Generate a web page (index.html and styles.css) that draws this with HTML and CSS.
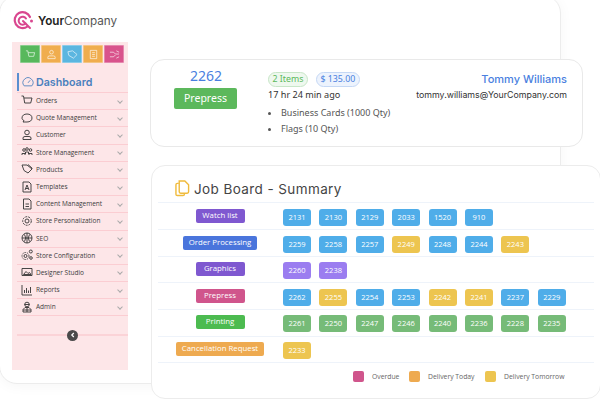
FILE: index.html
```html
<!DOCTYPE html>
<html lang="en">
<head>
    <meta charset="UTF-8">
    <title>YourCompany Job Board</title>
    <link rel="stylesheet" href="styles.css">
</head>
<body>
    <div class="stage">
        <!-- Back window with sidebar -->
        <div class="window">
            <div class="logo">
                <svg class="logo-mark" viewBox="0 0 22 22" width="22" height="22">
                    <path d="M15.5 16.5A8 8 0 1 1 18 7" fill="none" stroke="#d9478f" stroke-width="2.2" stroke-linecap="round"/>
                    <path d="M13.5 13.5A4 4 0 1 1 14 8.5" fill="none" stroke="#d9478f" stroke-width="2" stroke-linecap="round"/>
                    <path d="M11 11l7 7" stroke="#d9478f" stroke-width="2" stroke-linecap="round"/>
                    <circle cx="19.5" cy="11" r="1.5" fill="#d9478f"/>
                </svg>
                <span class="logo-text"><b>Your</b>Company</span>
            </div>
            <div class="sidebar">
                <div class="tabs">
                    <div class="tab green"><svg viewBox="0 0 12 12" width="11" height="11"><path d="M1 2h2l1.200 6h5.300L10.500 4H3.500M5 10.500h.01M9 10.500h.01" class="tab-icon"/></svg></div>
                    <div class="tab orange"><svg viewBox="0 0 12 12" width="11" height="11"><circle cx="6" cy="3.500" r="2" class="tab-icon"/><path d="M2 10.500V9q0-1.500 2-1.500h4q2 0 2 1.500v1.500z" class="tab-icon"/></svg></div>
                    <div class="tab blue"><svg viewBox="0 0 12 12" width="11" height="11"><path d="M1 3l5-1 5 4-4 4-5-3z" class="tab-icon"/></svg></div>
                    <div class="tab orange"><svg viewBox="0 0 12 12" width="11" height="11"><path d="M2.500 1.500h7v9h-7zM4.500 4h3M4.500 6h3M4.500 8h3" class="tab-icon"/></svg></div>
                    <div class="tab pink"><svg viewBox="0 0 12 12" width="11" height="11"><path d="M1 3.500h4l2 2h4M1 8.500h4l2-2M8 2l3 1.500M8 10l3-1.500" class="tab-icon"/></svg></div>
                </div>
                <div class="dash">
                    <svg viewBox="0 0 14 14" width="12" height="12"><path d="M2.500 11.500a5.800 5.800 0 1 1 9 0zM7 8l2.500-3" fill="none" stroke="#4a80bd" stroke-width="1"/></svg>
                    <span>Dashboard</span>
                </div>
                <ul class="menu">
                    <li><svg viewBox="0 0 12 12"><path d="M0.500 1h2l1.200 7h6L11 3H3M4.500 10.500h.01M9 10.500h.01"/></svg><span>Orders</span><i></i></li>
                    <li><svg viewBox="0 0 12 12"><path d="M6 2c3 0 5 1.500 5 4s-2 4-5 4H2l1-1.500C1.500 8 1 7 1 6c0-2.500 2-4 5-4z"/></svg><span>Quote Management</span><i></i></li>
                    <li><svg viewBox="0 0 12 12"><circle cx="6" cy="3.500" r="2.300"/><path d="M2 10.500V9q0-1.500 2-1.500h4q2 0 2 1.500v1.500z"/></svg><span>Customer</span><i></i></li>
                    <li><svg viewBox="0 0 12 12"><circle cx="3" cy="4" r="1.300"/><circle cx="6" cy="3" r="1.300"/><circle cx="9.500" cy="4" r="1.300"/><path d="M1 9V7.500h3V9M4.500 8V6h3v2M8 9V7.500h3V9"/></svg><span>Store Management</span><i></i></li>
                    <li><svg viewBox="0 0 12 12"><path d="M1 2h5l5 4-4 4-4-2.500zM7 1.500l4.500 4"/></svg><span>Products</span><i></i></li>
                    <li><svg viewBox="0 0 12 12"><path d="M2 1h6l2 2v8H2zM4 9l2-5 2 5M4.800 7.500h2.400"/></svg><span>Templates</span><i></i></li>
                    <li><svg viewBox="0 0 12 12"><path d="M2.500 1H8l2 2v8H2.500zM4.500 6h3.500M4.500 8.500h3.500"/></svg><span>Content Management</span><i></i></li>
                    <li><svg viewBox="0 0 12 12"><circle cx="6" cy="6" r="2"/><circle cx="6" cy="6" r="4.300" stroke-dasharray="2 1"/></svg><span>Store Personalization</span><i></i></li>
                    <li><svg viewBox="0 0 12 12"><circle cx="6" cy="6" r="5"/><path d="M1 6h10M6 1v10M3.500 2.500q2.500 3.500 0 7M8.500 2.500q-2.500 3.500 0 7"/></svg><span>SEO</span><i></i></li>
                    <li><svg viewBox="0 0 12 12"><circle cx="4.500" cy="7" r="1.500"/><circle cx="4.500" cy="7" r="3.500" stroke-dasharray="1.500 1"/><circle cx="9.800" cy="2.500" r="1.500"/><circle cx="10" cy="9" r="1.300"/></svg><span>Store Configuration</span><i></i></li>
                    <li><svg viewBox="0 0 12 12"><path d="M1 2.500h10v7H1zM2.500 8.500l2.500-3 2 2 1.500-1 1.500 2z"/></svg><span>Designer Studio</span><i></i></li>
                    <li><svg viewBox="0 0 12 12"><path d="M1 1v10h10M3.500 9V6M5.500 9V4M7.500 9V6.500M9.500 9V3"/></svg><span>Reports</span><i></i></li>
                    <li><svg viewBox="0 0 12 12"><circle cx="6" cy="3.500" r="2.300"/><path d="M3.500 3.500h5M2 11V8.500L4 6.500h4l2 2V11zM6 6.500V11M2 9h8"/></svg><span>Admin</span><i></i></li>
                </ul>
                <div class="collapse"><span class="collapse-btn"><svg viewBox="0 0 10 10" width="10" height="10"><path d="M5.800 3L3.800 5l2 2" fill="none" stroke="#fff" stroke-width="1.200"/></svg></span></div>
            </div>
        </div>

        <!-- Order card -->
        <div class="order-card">
            <div class="order-id">
                <div class="order-num">2262</div>
                <div class="order-status">Prepress</div>
            </div>
            <div class="order-info">
                <div class="order-tags">
                    <span class="tag tag-green">2 Items</span>
                    <span class="tag tag-blue">$ 135.00</span>
                </div>
                <div class="order-time">17 hr 24 min ago</div>
                <ul class="order-items">
                    <li>Business Cards (1000 Qty)</li>
                    <li>Flags (10 Qty)</li>
                </ul>
            </div>
            <div class="order-client">
                <div class="client-name">Tommy Williams</div>
                <div class="client-mail">tommy.williams@YourCompany.com</div>
            </div>
        </div>

        <!-- Job board -->
        <div class="board">
            <div class="board-title">
                <svg viewBox="0 0 16 18" width="15" height="17"><path d="M4 3.500H2.500Q1 3.500 1 5v10q0 1.500 1.500 1.500h6Q10 16.500 10 15v-1" fill="none" stroke="#f0bb3c" stroke-width="1.500"/><path d="M4.500 1h6L14.500 5v7.500q0 1.500-1.500 1.500H6q-1.500 0-1.500-1.500z" fill="#fff" stroke="#f0bb3c" stroke-width="1.500"/></svg>
                <h2>Job Board - Summary</h2>
            </div>
            <div class="row">
                <div class="row-label"><span class="pill purple">Watch list</span></div>
                <div class="chips"><span class="chip sky">2131</span><span class="chip sky">2130</span><span class="chip sky">2129</span><span class="chip sky">2033</span><span class="chip sky">1520</span><span class="chip sky">910</span></div>
            </div>
            <div class="row">
                <div class="row-label"><span class="pill indigo wide">Order Processing</span></div>
                <div class="chips"><span class="chip sky">2259</span><span class="chip sky">2258</span><span class="chip sky">2257</span><span class="chip yellow">2249</span><span class="chip sky">2248</span><span class="chip sky">2244</span><span class="chip yellow">2243</span></div>
            </div>
            <div class="row">
                <div class="row-label"><span class="pill purple">Graphics</span></div>
                <div class="chips"><span class="chip violet">2260</span><span class="chip violet">2238</span></div>
            </div>
            <div class="row">
                <div class="row-label"><span class="pill rose">Prepress</span></div>
                <div class="chips"><span class="chip sky">2262</span><span class="chip yellow">2255</span><span class="chip sky">2254</span><span class="chip sky">2253</span><span class="chip yellow">2242</span><span class="chip yellow">2241</span><span class="chip sky">2237</span><span class="chip sky">2229</span></div>
            </div>
            <div class="row">
                <div class="row-label"><span class="pill lime">Printing</span></div>
                <div class="chips"><span class="chip moss">2261</span><span class="chip moss">2250</span><span class="chip moss">2247</span><span class="chip moss">2246</span><span class="chip moss">2240</span><span class="chip moss">2236</span><span class="chip moss">2228</span><span class="chip moss">2235</span></div>
            </div>
            <div class="row">
                <div class="row-label"><span class="pill amber wide">Cancellation Request</span></div>
                <div class="chips"><span class="chip yellow">2233</span></div>
            </div>
            <div class="legend">
                <span class="legend-item"><i class="swatch rose"></i>Overdue</span>
                <span class="legend-item"><i class="swatch amber"></i>Delivery Today</span>
                <span class="legend-item"><i class="swatch yellow"></i>Delivery Tomorrow</span>
            </div>
        </div>
    </div>
</body>
</html>
```

FILE: styles.css
```css
body {
    margin: 0;
    background: #fff;
    font-family: "Open Sans", sans-serif;
    overflow: hidden;
}

.stage {
    position: relative;
    width: 600px;
    height: 400px;
    overflow: hidden;
}

/* Back window */
.window {
    position: absolute;
    top: -5px;
    left: -1px;
    width: 560px;
    height: 387px;
    background: #fff;
    border: 1px solid #ececec;
    border-radius: 18px;
    box-shadow: 0 2px 14px rgba(0, 0, 0, 0.04);
}

.logo {
    display: flex;
    align-items: center;
    gap: 4px;
    padding: 13px 0 0 12px;
    height: 23px;
}

.logo-text {
    font-family: Inter, sans-serif;
    font-size: 11.700px;
    color: #555;
}

.logo-text b {
    font-weight: 600;
    color: #222;
}

.sidebar {
    margin: 10px 0 0 12px;
    width: 116px;
    height: 328px;
    background: #fde6e8;
    padding: 3px 0 0 5px;
    box-sizing: border-box;
}

.tabs {
    display: flex;
    gap: 1px;
    margin-left: 3px;
}

.tab {
    flex: 0 0 20px;
    height: 18px;
    box-sizing: border-box;
    display: flex;
    align-items: center;
    justify-content: center;
    border: 1px solid rgba(255, 255, 255, 0.3);
    border-radius: 1px;
}

.tab-icon {
    fill: none;
    stroke: rgba(255, 255, 255, 0.75);
    stroke-width: 0.9;
}

.green { background: #58b85c; }
.orange { background: #f0ad4e; }
.blue { background: #5bb6e0; }
.pink { background: #d9538c; }

.dash {
    display: flex;
    align-items: center;
    gap: 2px;
    height: 18px;
    margin-top: 10px;
    padding-left: 3px;
    border-left: 2px solid #5a8fd0;
    color: #4a80bd;
    font-family: Inter, sans-serif;
    font-size: 10.700px;
    font-weight: 600;
}

.menu {
    list-style: none;
    margin: 1px 0 0;
    padding: 0;
    border-top: 1px solid #fbcdd2;
}

.menu li {
    display: flex;
    align-items: center;
    height: 15.200px;
    padding: 0 5px 1px 0;
    border-bottom: 1px solid #fbcdd2;
    color: #3c3c3c;
    font-size: 6.500px;
}

.menu svg {
    flex: 0 0 12px;
    width: 12px;
    height: 12px;
    margin: 0 3px 0 4px;
    fill: none;
    stroke: #333;
    stroke-width: 0.9;
}

.menu span {
    flex: 1;
}

/* small chevron at the row end */
.menu i {
    width: 3px;
    height: 3px;
    margin-right: 1px;
    border-right: 1px solid #aaa;
    border-bottom: 1px solid #aaa;
    transform: rotate(45deg);
}

.collapse {
    display: flex;
    justify-content: center;
    align-items: center;
    height: 2px;
    margin-top: 18px;
    background: #fbd3d7;
}

.collapse-btn {
    display: flex;
    align-items: center;
    justify-content: center;
    width: 11px;
    height: 11px;
    flex: none;
    border-radius: 50%;
    background: #4a4a4a;
}

/* Order card */
.order-card {
    position: absolute;
    top: 59px;
    left: 150px;
    width: 433px;
    height: 88px;
    box-sizing: border-box;
    display: flex;
    background: #fff;
    border: 1px solid #e9e9e9;
    border-radius: 14px;
    font-family: "Noto Sans", sans-serif;
    color: #444;
}

.order-id {
    flex: 0 0 109px;
    display: flex;
    flex-direction: column;
    align-items: center;
    padding-top: 6px;
}

.order-num {
    color: #4a7fe0;
    font-size: 14px;
    line-height: 20px;
    margin-left: 1px;
}

.order-status {
    margin-top: 2px;
    width: 63px;
    height: 21px;
    line-height: 20px;
    text-align: center;
    border-radius: 2px;
    background: #5cb85c;
    color: #fff;
    font-size: 10.500px;
}

.order-info {
    flex: 1;
    margin-left: 8px;
    padding-top: 12px;
}

.order-tags {
    display: flex;
    gap: 8px;
}

.tag {
    box-sizing: border-box;
    height: 15px;
    line-height: 13px;
    padding: 0 3.500px;
    border-radius: 8px;
    font-size: 8.800px;
}

.tag-green {
    color: #5cb85c;
    background: #eef8ee;
    border: 1px solid #c8e6c8;
}

.tag-blue {
    color: #4a7fe0;
    background: #edf3fd;
    border: 1px solid #c5d8f5;
}

.order-time {
    font-size: 9.100px;
    line-height: 15px;
    color: #333;
}

.order-items {
    margin: 3px 0 0;
    padding-left: 13px;
    font-size: 9px;
    line-height: 15.800px;
    color: #555;
}

.order-client {
    text-align: right;
    padding: 12px 15px 0 0;
}

.client-name {
    color: #4a7fe0;
    font-family: Inter, sans-serif;
    font-size: 11px;
    font-weight: 500;
    line-height: 14px;
}

.client-mail {
    margin-top: 2px;
    font-family: Inter, sans-serif;
    font-size: 8.800px;
    line-height: 14px;
    color: #333;
}

/* Job board */
.board {
    position: absolute;
    top: 165px;
    left: 151px;
    width: 450px;
    height: 234px;
    box-sizing: border-box;
    padding: 0 6px;
    background: #fff;
    border: 1px solid #ececec;
    border-radius: 14px;
}

.board-title {
    display: flex;
    align-items: center;
    gap: 4px;
    height: 37.300px;
    box-sizing: border-box;
    padding: 9px 0 0 17px;
    border-bottom: 1px solid #eef3fa;
}

.board-title h2 {
    margin: 0;
    font-family: Inter, sans-serif;
    font-size: 13.500px;
    font-weight: 400;
    color: #444;
    letter-spacing: 0.4px;
}

.row {
    display: flex;
    height: 25.650px;
    border-bottom: 1px solid #eef3fa;
}

.row-label {
    flex: 0 0 124px;
    display: flex;
    justify-content: center;
    padding-top: 5.600px;
    box-sizing: border-box;
}

.pill {
    width: 49px;
    height: 14px;
    line-height: 13px;
    text-align: center;
    white-space: nowrap;
    border-radius: 2px;
    color: #fff;
    font-size: 7.800px;
}

.pill.wide {
    width: auto;
    padding: 0 6px;
}

.purple { background: #7f58d0; }
.indigo { background: #4a75dc; }
.rose { background: #d0558c; }
.lime { background: #4cbb50; }
.amber { background: #eeaa50; }

.chips {
    display: flex;
    gap: 8.400px;
    padding: 5.600px 0 0 1px;
}

.chip {
    width: 28px;
    height: 17px;
    line-height: 17px;
    text-align: center;
    border-radius: 3px;
    color: #fff;
    font-size: 7.500px;
}

.sky { background: #4fade9; }
.yellow { background: #edc550; }
.violet { background: #9b7df0; }
.moss { background: #76bb78; }

.legend {
    display: flex;
    align-items: center;
    height: 27px;
    padding-left: 195px;
    color: #666;
    font-size: 6.800px;
}

.legend-item {
    display: flex;
    align-items: center;
}

.legend-item:nth-child(1) { width: 56px; }
.legend-item:nth-child(2) { width: 76px; }

.swatch {
    width: 11px;
    height: 11px;
    margin-right: 8px;
    border-radius: 2px;
}
```
